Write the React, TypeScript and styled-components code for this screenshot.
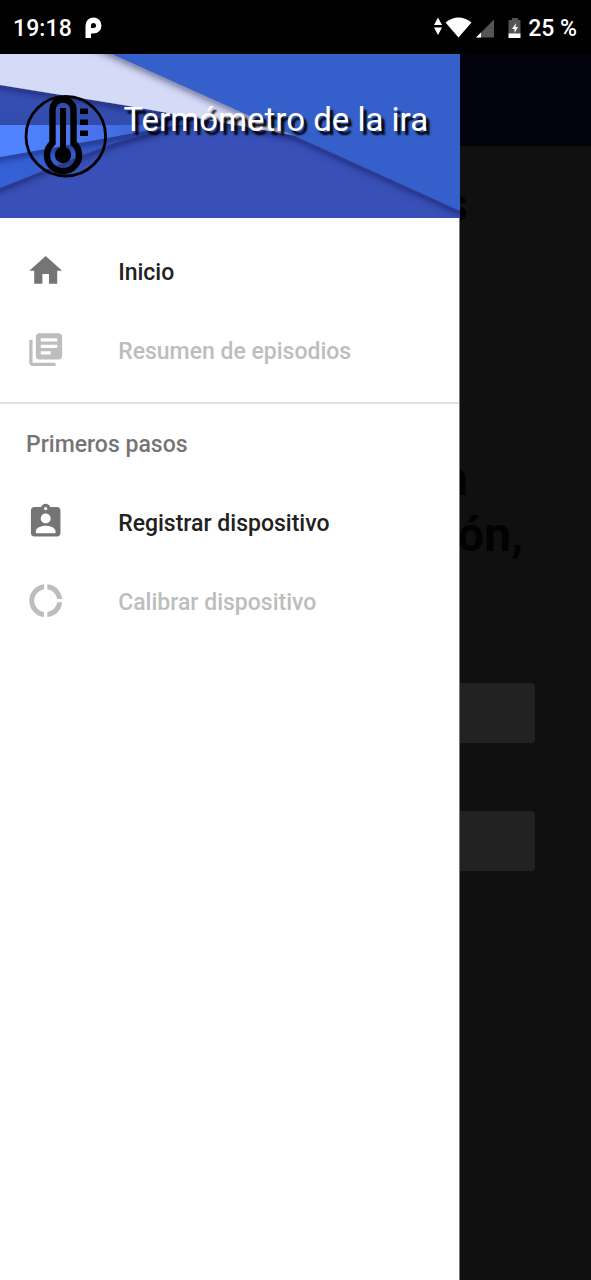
import React from "react";
import styled, { createGlobalStyle } from "styled-components";

const GlobalStyle = createGlobalStyle`
  * { box-sizing: border-box; }
  body { margin: 0; background: #101010; font-family: Roboto, "Liberation Sans", sans-serif; }
`;

const Screen = styled.div`
  position: relative;
  display: flex;
  flex-direction: column;
  width: 591px;
  height: 1280px;
  overflow: hidden;
  background: #101010;
`;

const StatusBar = styled.header`
  display: flex;
  flex: none;
  align-items: center;
  justify-content: space-between;
  height: 54px;
  padding: 2px 14px 0 13px;
  background: #000;
  color: #fff;
  font-size: 23px;
  font-weight: 480;
`;

const StatusGroup = styled.div`
  display: flex;
  align-items: center;
`;

const Clock = styled.span`
  width: 72px;
  letter-spacing: 0.1px;
`;

const Battery = styled.span`
  white-space: nowrap;
`;

const AppBar = styled.div`
  flex: none;
  height: 92px;
  background: #02020c;
`;

const Content = styled.main`
  display: flex;
  flex-direction: column;
  align-items: flex-end;
  padding-right: 56px;
  color: #020202;
  font-weight: 700;
`;

const Heading = styled.h1`
  margin: 31px 67px 0 0;
  font-size: 48px;
  line-height: 56px;
`;

const Question = styled.h2`
  margin: 218px 12px 0 0;
  font-size: 48px;
  line-height: 56px;
`;

const QuestionLine = styled.span<{ $inset?: number }>`
  display: block;
  text-align: right;
  padding-right: ${(p) => p.$inset ?? 0}px;
`;

const Field = styled.div<{ $gap: number }>`
  width: 479px;
  height: 60px;
  margin-top: ${(p) => p.$gap}px;
  border-radius: 4px;
  background: #222;
`;

const Drawer = styled.aside`
  position: absolute;
  top: 54px;
  left: 0;
  bottom: 0;
  width: 460px;
  background: #fff;
  border-right: 1px solid #77797b;
`;

const DrawerHeader = styled.div`
  position: relative;
  display: flex;
  width: 460px;
  height: 164px;
  padding: 41px 0 0 24px;
  overflow: hidden;
  background: #3850b7;
`;

const Backdrop = styled.svg`
  position: absolute;
  inset: 0;
`;

const Logo = styled.svg`
  position: relative;
  flex: none;
`;

const Title = styled.div`
  position: relative;
  margin: 5px 0 0 16.5px;
  color: #fff;
  font-size: 33px;
  line-height: 40px;
  white-space: nowrap;
  text-shadow: 3.5px 4px 2px #000;
`;

const Menu = styled.nav`
  padding-top: 14px;
`;

const Item = styled.div<{ $disabled?: boolean; $lift: number }>`
  display: flex;
  align-items: center;
  height: 79px;
  padding-left: 26.4px;
  color: ${(p) => (p.$disabled ? "#bdbdbd" : "#212121")};
  font-size: 23px;
  font-weight: 480;
  svg {
    flex: none;
    margin: 0 52.4px ${(p) => p.$lift}px 0;
    fill: ${(p) => (p.$disabled ? "#bdbdbd" : "#757575")};
  }
`;

const ItemLabel = styled.span<{ $drop?: number }>`
  padding-top: ${(p) => p.$drop ?? 0}px;
`;

const Divider = styled.hr`
  height: 2px;
  margin: 12px 0 0;
  border: 0;
  background: #e0e0e0;
`;

const Section = styled.div`
  height: 80px;
  padding: 27px 0 0 26px;
  color: #757575;
  font-size: 23px;
  font-weight: 480;
  line-height: 27px;
`;

const icons = {
  home: "M10 20v-6h4v6h5v-8h3L12 3 2 12h3v8z",
  books:
    "M4 6H2v14c0 1.1.9 2 2 2h14v-2H4V6zm16-4H8c-1.1 0-2 .9-2 2v12c0 1.1.9 2 2 2h12c1.1 0 2-.9 2-2V4c0-1.1-.9-2-2-2zm-1 9H9V9h10v2zm-4 4H9v-2h6v2zm4-8H9V5h10v2z",
  badge:
    "M19 3h-4.18C14.4 1.84 13.3 1 12 1c-1.3 0-2.4.84-2.82 2H5c-1.1 0-2 .9-2 2v14c0 1.1.9 2 2 2h14c1.1 0 2-.9 2-2V5c0-1.1-.9-2-2-2zm-7 0c.55 0 1 .45 1 1s-.45 1-1 1-1-.45-1-1 .45-1 1-1zm0 4c1.66 0 3 1.34 3 3s-1.34 3-3 3-3-1.34-3-3 1.34-3 3-3zm6 12H6v-1.4c0-2 4-3.1 6-3.1s6 1.1 6 3.1V19z",
  donut:
    "M11 5.08V2c-5 .5-9 4.81-9 10s4 9.5 9 10v-3.08c-3-.48-6-3.4-6-6.92s3-6.44 6-6.92zM18.97 11H22c-.47-5-4-8.53-9-9v3.08C16 5.51 18.54 8 18.97 11zM13 18.92V22c5-.47 8.53-4 9-9h-3.03c-.43 3-2.97 5.49-5.97 5.92z",
};

type MenuItemProps = {
  icon: keyof typeof icons;
  label: string;
  disabled?: boolean;
  lift: number;
  drop?: number;
};

const MenuItem = ({ icon, label, disabled, lift, drop }: MenuItemProps) => (
  <Item $disabled={disabled} $lift={lift}>
    <svg width="39.4" height="39.4" viewBox="0 0 24 24">
      <path d={icons[icon]} />
    </svg>
    <ItemLabel $drop={drop}>{label}</ItemLabel>
  </Item>
);

const HeaderArt = () => (
  <Backdrop width="460" height="164" viewBox="0 0 460 164">
    <defs>
      <filter id="fold" x="-10%" y="-20%" width="120%" height="150%">
        <feDropShadow dx="0" dy="2" stdDeviation="4" floodColor="#0a1240" floodOpacity="0.65" />
      </filter>
      <linearGradient id="band" x1="0" y1="0" x2="0" y2="1">
        <stop offset="0" stopColor="#3850b8" />
        <stop offset="1" stopColor="#324cac" />
      </linearGradient>
      <linearGradient id="light" gradientUnits="userSpaceOnUse" x1="0" y1="0" x2="210" y2="0">
        <stop offset="0.1" stopColor="#4f83ff" />
        <stop offset="0.5" stopColor="#4570e8" />
        <stop offset="1" stopColor="#3850b7" />
      </linearGradient>
      <linearGradient id="mid" gradientUnits="userSpaceOnUse" x1="0" y1="0" x2="190" y2="0">
        <stop offset="0.1" stopColor="#3660d6" />
        <stop offset="0.6" stopColor="#3557c4" />
        <stop offset="1" stopColor="#3850b7" />
      </linearGradient>
    </defs>
    <path d="M-20 60H200L150 79 115 89 80 102 0 134-20 142Z" fill="url(#mid)" filter="url(#fold)" />
    <path d="M-20 60H230L160 74 107 84 0 103-20 106Z" fill="url(#light)" filter="url(#fold)" />
    <path d="M-20 20H240V71H-20Z" fill="url(#band)" />
    <path d="M-20-20H140L297 82 123 51 0 31-20 28Z" fill="#d5daf6" filter="url(#fold)" />
    <path d="M68-20H480V166L297 83 112 0Z" fill="#345fca" filter="url(#fold)" />
  </Backdrop>
);

const Thermometer = () => (
  <Logo width="83" height="83" viewBox="0 0 83 83">
    <circle cx="41.800" cy="41.200" r="39.800" fill="none" stroke="#000" strokeWidth="2.8" />
    <path
      d="M28.500 48V15a10.500 10.500 0 0 1 21 0V48a16 16 0 1 1-21 0Z"
      fill="none"
      stroke="#000"
      strokeWidth="6.4"
    />
    <path d="M39 13V61" stroke="#000" strokeWidth="6" />
    <circle cx="39" cy="60" r="8.200" />
    <path d="M56 13.500h8v5.500h-8zM56 24.500h8v5.500h-8zM56 35.500h8v5.500h-8z" />
  </Logo>
);

export default function App() {
  return (
    <>
      <GlobalStyle />
      <Screen>
        <StatusBar>
          <StatusGroup>
            <Clock>19:18</Clock>
            <svg width="17" height="22" viewBox="0 0 17 22">
              <path
                fill="#fff"
                fillRule="evenodd"
                d="M.5 21V8.500a8 8 0 1 1 8 8H6V21ZM6 11h2.500a2.500 2.500 0 1 0-2.500-2.500Z"
              />
            </svg>
          </StatusGroup>
          <StatusGroup>
            <svg width="94" height="24" viewBox="0 0 94 24">
              <path fill="#fff" d="M0 9 4 1.500l4 7.500ZM0 11.500h8L4 19Z" />
              <path fill="#fff" d="M11.500 6.500q13-10 26 0L24.500 21.500Z" />
              <path fill="#555" d="M60 3.500V21.500H42Z" />
              <path fill="#fff" d="M47 16.500v5h-5Z" />
              <path fill="#555" d="M74.500 4h3.500V2h6v2h2.500v14h-12Z" />
              <path fill="#fff" d="M74.500 17.500h12v4.500h-12ZM82 7l-4 6h2.500v4L84 11h-2.500Z" />
            </svg>
            <Battery>25 %</Battery>
          </StatusGroup>
        </StatusBar>
        <AppBar />
        <Content>
          <Heading>s</Heading>
          <Question>
            <QuestionLine $inset={55}>a</QuestionLine>
            <QuestionLine>ón,</QuestionLine>
          </Question>
          <Field $gap={120} />
          <Field $gap={68} />
        </Content>
        <Drawer>
          <DrawerHeader>
            <HeaderArt />
            <Thermometer />
            <Title>Termómetro de la ira</Title>
          </DrawerHeader>
          <Menu>
            <MenuItem icon="home" label="Inicio" lift={1} drop={2} />
            <MenuItem icon="books" label="Resumen de episodios" lift={1} drop={2} disabled />
            <Divider />
            <Section>Primeros pasos</Section>
            <MenuItem icon="badge" label="Registrar dispositivo" lift={3} />
            <MenuItem icon="donut" label="Calibrar dispositivo" lift={3} disabled />
          </Menu>
        </Drawer>
      </Screen>
    </>
  );
}
